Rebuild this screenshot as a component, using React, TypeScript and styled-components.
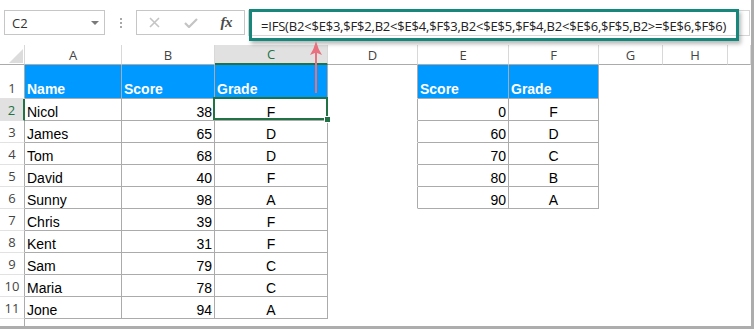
import React from 'react';
import styled, { createGlobalStyle } from 'styled-components';

const Global = createGlobalStyle`
  html, body { margin: 0; padding: 0; background: #fff; }
  #root { width: 754px; height: 329px; }
`;

const Frame = styled.div`
  position: relative;
  width: 754px;
  height: 329px;
  box-sizing: border-box;
  border-right: 3px solid #adadad;
  border-bottom: 3px solid #adadad;
  overflow: hidden;
  background: #fff;
  display: flex;
  flex-direction: column;
`;

const Toolbar = styled.div`
  height: 45px;
  flex: none;
  box-sizing: border-box;
  display: flex;
  align-items: flex-start;
  padding: 10px 1px 0 4px;
`;

const NameBox = styled.div`
  width: 101px;
  height: 25px;
  box-sizing: border-box;
  border: 1px solid #c6c6c6;
  display: flex;
  align-items: center;
  justify-content: space-between;
  padding: 0 5px 0 7px;
  font: 13px "Open Sans", sans-serif;
  color: #333;
`;

const Caret = styled.span`
  width: 0;
  height: 0;
  border-left: 4px solid transparent;
  border-right: 4px solid transparent;
  border-top: 4px solid #7a7a7a;
`;

const Grip = styled.div`
  width: 31px;
  height: 25px;
  display: flex;
  flex-direction: column;
  align-items: center;
  justify-content: center;
  gap: 2px;
`;

const GripDot = styled.span`
  width: 2px;
  height: 2px;
  background: #a8a8a8;
`;

const FxButtons = styled.div`
  width: 109px;
  height: 25px;
  box-sizing: border-box;
  border: 1px solid #c6c6c6;
  display: flex;
  align-items: center;
`;

const FxSlot = styled.div`
  width: 36px;
  height: 23px;
  display: flex;
  align-items: center;
  justify-content: center;
`;

const FxLabel = styled.span`
  font: italic 600 15px "Liberation Serif", serif;
  color: #4a4a4a;
  letter-spacing: -0.5px;
`;

const FormulaInput = styled.div`
  flex: 1;
  height: 26px;
  margin-left: 3px;
  box-sizing: border-box;
  border: 1px solid #d6d6d6;
  padding: 7px 0 0 12px;
  font: 13px/16px "Open Sans", sans-serif;
  letter-spacing: -0.2px;
  color: #222;
  white-space: nowrap;
  overflow: visible;
`;

const Highlight = styled.div`
  position: absolute;
  left: 249px;
  top: 9px;
  width: 490px;
  height: 32px;
  box-sizing: border-box;
  border: 3px solid #16877a;
  box-shadow: 2px 3px 4px rgba(0, 0, 0, 0.28);
  pointer-events: none;
`;

const ArrowSvg = styled.svg`
  position: absolute;
  left: 309px;
  top: 40px;
`;

const Sheet = styled.div`
  flex: none;
  display: grid;
  grid-template-columns: 25px 97px 93px 113px 90px 91px 90px 64px 65px 1fr;
  grid-template-rows: 20px 34px repeat(11, 22px);
`;

const Corner = styled.div`
  box-sizing: border-box;
  border-right: 1px solid #d8d8d8;
  border-bottom: 1px solid #ababab;
  display: flex;
  align-items: flex-end;
  justify-content: flex-end;
  padding: 0 1px 1px 0;
`;

const ColHead = styled.div<{ $active?: boolean }>`
  box-sizing: border-box;
  border-right: 1px solid #d8d8d8;
  border-bottom: ${(p) => (p.$active ? '2px solid #217346' : '1px solid #ababab')};
  background: ${(p) => (p.$active ? '#e1e1e1' : '#fff')};
  display: flex;
  align-items: center;
  justify-content: center;
  font: 13px "Open Sans", sans-serif;
  color: ${(p) => (p.$active ? '#217346' : '#444')};
`;

const RowHead = styled.div<{ $active?: boolean }>`
  box-sizing: border-box;
  border-right: ${(p) => (p.$active ? '2px solid #217346' : '1px solid #ababab')};
  border-bottom: 1px solid #e2e2e2;
  background: ${(p) => (p.$active ? '#e1e1e1' : '#fff')};
  display: flex;
  align-items: flex-end;
  justify-content: center;
  padding-bottom: 2px;
  font: 13px/16px "Open Sans", sans-serif;
  color: ${(p) => (p.$active ? '#217346' : '#444')};
`;

const Cell = styled.div<{
  $blue?: boolean;
  $bold?: boolean;
  $align: 'left' | 'right' | 'center';
  $br?: boolean;
  $bb?: boolean;
  $selected?: boolean;
}>`
  position: relative;
  box-sizing: border-box;
  min-width: 0;
  border-right: 1px solid ${(p) => (p.$br ? '#ababab' : 'transparent')};
  border-bottom: 1px solid ${(p) => (p.$bb ? '#ababab' : 'transparent')};
  background: ${(p) => (p.$blue ? '#0099ff' : '#fff')};
  color: ${(p) => (p.$blue ? '#fff' : '#000')};
  font: ${(p) => (p.$bold ? 'bold' : 'normal')} 14px/16px "Liberation Sans", Arial, sans-serif;
  display: flex;
  align-items: flex-end;
  justify-content: ${(p) =>
    p.$align === 'left' ? 'flex-start' : p.$align === 'right' ? 'flex-end' : 'center'};
  padding: 0 2px ${(p) => (p.$bold ? '1px' : '0')} 2px;
  white-space: nowrap;
  ${(p) =>
    p.$selected &&
    `
    &::after {
      content: '';
      position: absolute;
      left: -2px; top: -2px; right: -1px; bottom: 0;
      border: 2px solid #217346;
      z-index: 2;
    }
    &::before {
      content: '';
      position: absolute;
      right: -3px; bottom: -2px;
      width: 5px; height: 5px;
      background: #217346;
      outline: 1px solid #fff;
      z-index: 3;
    }
  `}
`;

type CellData = { text: string; align: 'left' | 'right' | 'center'; bold?: boolean; blue?: boolean };

const columns = ['A', 'B', 'C', 'D', 'E', 'F', 'G', 'H', ''];

const students: [string, number, string][] = [
  ['Nicol', 38, 'F'],
  ['James', 65, 'D'],
  ['Tom', 68, 'D'],
  ['David', 40, 'F'],
  ['Sunny', 98, 'A'],
  ['Chris', 39, 'F'],
  ['Kent', 31, 'F'],
  ['Sam', 79, 'C'],
  ['Maria', 78, 'C'],
  ['Jone', 94, 'A'],
];

const scale: [number, string][] = [
  [0, 'F'],
  [60, 'D'],
  [70, 'C'],
  [80, 'B'],
  [90, 'A'],
];

function buildGrid(): (CellData | null)[][] {
  const rows: (CellData | null)[][] = [];
  for (let r = 0; r < 11; r++) {
    const row: (CellData | null)[] = new Array(9).fill(null);
    if (r === 0) {
      row[0] = { text: 'Name', align: 'left', bold: true, blue: true };
      row[1] = { text: 'Score', align: 'left', bold: true, blue: true };
      row[2] = { text: 'Grade', align: 'left', bold: true, blue: true };
      row[4] = { text: 'Score', align: 'left', bold: true, blue: true };
      row[5] = { text: 'Grade', align: 'left', bold: true, blue: true };
    } else {
      const s = students[r - 1];
      if (s) {
        row[0] = { text: s[0], align: 'left' };
        row[1] = { text: String(s[1]), align: 'right' };
        row[2] = { text: s[2], align: 'center' };
      }
      const g = scale[r - 1];
      if (g) {
        row[4] = { text: String(g[0]), align: 'right' };
        row[5] = { text: g[1], align: 'center' };
      }
    }
    rows.push(row);
  }
  rows.push(new Array(9).fill(null));
  return rows;
}

const grid = buildGrid();

export default function App() {
  return (
    <>
      <Global />
      <Frame>
        <Toolbar>
          <NameBox>
            <span>C2</span>
            <Caret />
          </NameBox>
          <Grip>
            <GripDot />
            <GripDot />
            <GripDot />
          </Grip>
          <FxButtons>
            <FxSlot>
              <svg width="11" height="11" viewBox="0 0 11 11">
                <path d="M1 1 L10 10 M10 1 L1 10" stroke="#c4c4c4" strokeWidth="1.6" fill="none" />
              </svg>
            </FxSlot>
            <FxSlot>
              <svg width="14" height="10" viewBox="0 0 14 10">
                <path d="M1 5 L5 9 L13 1" stroke="#c4c4c4" strokeWidth="2.2" fill="none" />
              </svg>
            </FxSlot>
            <FxSlot>
              <FxLabel>fx</FxLabel>
            </FxSlot>
          </FxButtons>
          <FormulaInput>=IFS(B2&lt;$E$3,$F$2,B2&lt;$E$4,$F$3,B2&lt;$E$5,$F$4,B2&lt;$E$6,$F$5,B2&gt;=$E$6,$F$6)</FormulaInput>
        </Toolbar>
        <Sheet>
          <Corner>
            <svg width="14" height="14" viewBox="0 0 14 14">
              <path d="M14 0 L14 14 L0 14 Z" fill="#dcdcdc" />
            </svg>
          </Corner>
          {columns.map((c, i) => (
            <ColHead key={'h' + i} $active={c === 'C'}>
              {c}
            </ColHead>
          ))}
          {grid.map((row, r) => (
            <React.Fragment key={'r' + r}>
              <RowHead $active={r === 1}>{r + 1}</RowHead>
              {row.map((cell, c) => {
                const right = c + 1 < row.length ? row[c + 1] : null;
                const below = r + 1 < grid.length ? grid[r + 1][c] : null;
                return (
                  <Cell
                    key={'c' + r + '-' + c}
                    $align={cell ? cell.align : 'left'}
                    $bold={cell?.bold}
                    $blue={cell?.blue}
                    $br={!!cell || !!right}
                    $bb={!!cell || !!below}
                    $selected={r === 1 && c === 2}
                  >
                    {cell?.text}
                  </Cell>
                );
              })}
            </React.Fragment>
          ))}
        </Sheet>
        <Highlight />
        <ArrowSvg width="14" height="54" viewBox="0 0 14 54">
          <path d="M7 1 Q9 9 13 15 L7 12.5 L1 15 Q5 9 7 1 Z" fill="#e8707f" />
          <rect x="6" y="12" width="2" height="41" fill="#e8707f" />
        </ArrowSvg>
      </Frame>
    </>
  );
}
